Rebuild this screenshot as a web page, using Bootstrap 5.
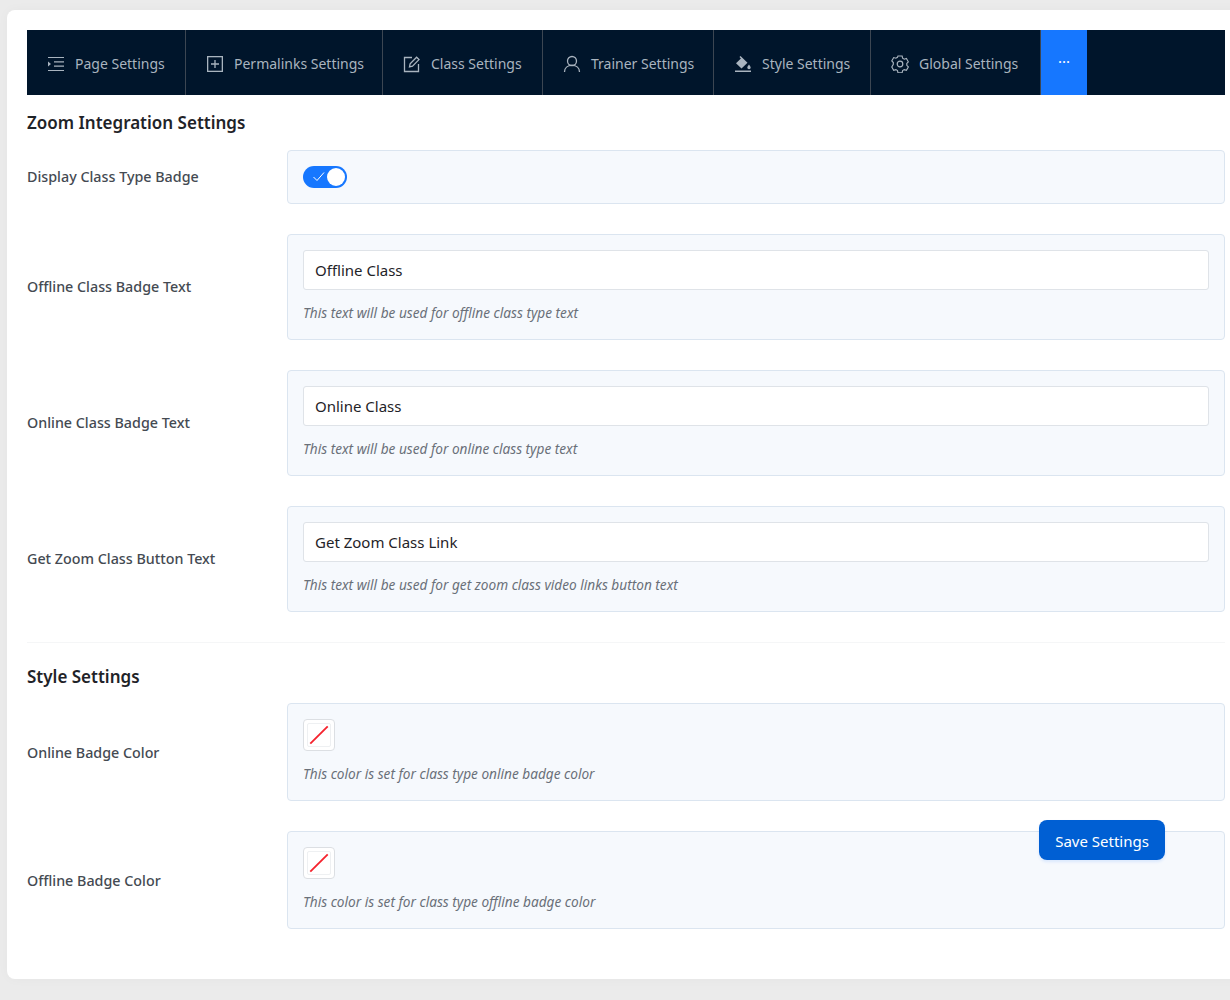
<!DOCTYPE html>
<html lang="en">
<head>
    <meta charset="UTF-8">
    <meta name="viewport" content="width=device-width, initial-scale=1.0">
    <title>Zoom Integration Settings</title>
    <link href="https://cdn.jsdelivr.net/npm/bootstrap@5.3.1/dist/css/bootstrap.min.css" rel="stylesheet">
    <style>
        html, body {
            overflow: hidden;
            height: 1000px;
        }
        body {
            background-color: #ebebeb;
            font-family: "Noto Sans", sans-serif;
            position: relative;
        }
        .settings-panel {
            width: 1238px;
            height: 969px;
            margin: 10px 0 0 7px;
            padding: 20px;
            background-color: #fff;
            border-radius: 8px;
            box-shadow: 0 0 12px rgba(0, 0, 0, .03);
        }
        .tabs-bar {
            height: 65px;
            background-color: #00152b;
            flex-wrap: nowrap;
        }
        .tabs-bar .tab-link {
            height: 65px;
            padding: 2px 0 0 20px;
            gap: 10px;
            flex: none;
            color: #a9b4bf;
            font-size: 14px;
            white-space: nowrap;
            border-right: 1px solid #3c4652;
            text-decoration: none;
        }
        .tab-link:nth-child(1) { width: 159px; }
        .tab-link:nth-child(2) { width: 197px; }
        .tab-link:nth-child(3) { width: 160px; }
        .tab-link:nth-child(4) { width: 171px; }
        .tab-link:nth-child(5) { width: 157px; }
        .tab-link:nth-child(6) { width: 170px; }
        .tabs-bar .tab-link svg {
            width: 18px;
            height: 18px;
            flex: none;
        }
        .tabs-bar .tab-more {
            width: 46px;
            height: 65px;
            padding-bottom: 2px;
            color: #fff;
            font-size: 15px;
            background-color: #1677ff;
            text-decoration: none;
        }
        .section-title {
            margin: 0;
            font-size: 17px;
            font-weight: 600;
            line-height: 24px;
            color: #1f2328;
        }
        .first-title { padding-top: 16px; height: 55px; }
        .second-title { padding-top: 22px; height: 60px; }
        .setting-row {
            margin-bottom: 30px;
        }
        .setting-row:last-child {
            margin-bottom: 0;
        }
        .setting-label {
            width: 260px;
            flex: none;
            font-size: 14.3px;
            font-weight: 500;
            color: #444a52;
        }
        .label-top { margin-top: -1px; }
        .label-low { margin-top: 2px; }
        .setting-box {
            flex: 1;
            padding: 15px;
            background-color: #f6f9fd;
            border: 1px solid #dbe5f0;
            border-radius: 4px;
        }
        .setting-box .form-control {
            height: 40px;
            padding: 0 11px;
            font-size: 15px;
            color: #1f2328;
            border-color: #dfe3e8;
            border-radius: 3px;
        }
        .setting-hint {
            margin: 12px 0 1px;
            font-size: 13.65px;
            line-height: 21px;
            font-style: italic;
            color: #6a7079;
        }
        .toggle-pill {
            width: 44px;
            height: 22px;
            padding: 2px;
            background-color: #1677ff;
            border-radius: 11px;
        }
        .toggle-pill .toggle-knob {
            width: 18px;
            height: 18px;
            background-color: #fff;
            border-radius: 50%;
        }
        .swatch-empty {
            display: block;
            width: 32px;
            height: 32px;
            padding: 3px;
            background-color: #fff;
            border: 1px solid #dcdfe3;
            border-radius: 4px;
        }
        .swatch-empty svg {
            display: block;
            width: 24px;
            height: 24px;
            border: 1px solid #eef0f2;
            border-radius: 2px;
        }
        .divider-line {
            margin: 30px 0 0;
            border-color: #d9dde1;
        }
        .save-btn {
            position: absolute;
            left: 1039px;
            top: 820px;
            width: 126px;
            height: 40px;
            padding: 2px 0 0;
            font-size: 15px;
            color: #fff;
            background-color: #005fd3;
            border: 0;
            border-radius: 8px;
            box-shadow: 0 2px 3px rgba(22, 119, 255, .12);
        }
    </style>
</head>
<body>
<div class="settings-panel">
    <nav class="tabs-bar d-flex">
        <a class="tab-link d-flex align-items-center" href="#">
            <svg viewBox="0 0 18 18" fill="none" stroke="currentColor" stroke-width="1.2"><path d="M1 2.500h16M7 6.800h10M7 11.200h10M1 15.500h16"/><path d="M1 6.500l3 2.500-3 2.500z" fill="currentColor" stroke="none"/></svg>
            Page Settings
        </a>
        <a class="tab-link d-flex align-items-center" href="#">
            <svg viewBox="0 0 18 18" fill="none" stroke="currentColor" stroke-width="1.3"><rect x="1.650" y="1.650" width="14.700" height="14.700"/><path d="M9 5v8M5 9h8"/></svg>
            Permalinks Settings
        </a>
        <a class="tab-link d-flex align-items-center" href="#">
            <svg viewBox="0 0 18 18" fill="none" stroke="currentColor" stroke-width="1.3"><path d="M9 2.500H1.500v14h14V9"/><path d="M6.500 11.800l.6-3L13.600 2.200l2.400 2.400-6.500 6.600z"/></svg>
            Class Settings
        </a>
        <a class="tab-link d-flex align-items-center" href="#">
            <svg viewBox="0 0 18 18" fill="none" stroke="currentColor" stroke-width="1.3"><circle cx="9" cy="6" r="4.500"/><path d="M1.500 17c0-4 3-6.600 7.500-6.600s7.500 2.600 7.500 6.600"/></svg>
            Trainer Settings
        </a>
        <a class="tab-link d-flex align-items-center" href="#">
            <svg viewBox="0 0 18 18" fill="currentColor"><path d="M6.500 1l-1 1 1.400 1.400L2 8.200l5.500 5.300 6-5.800z"/><path d="M15 9.500c1 1.300 1.700 2.200 1.700 3a1.700 1.700 0 0 1-3.400 0c0-.8.700-1.700 1.700-3z"/><rect x="1" y="15.500" width="16" height="1.500"/></svg>
            Style Settings
        </a>
        <a class="tab-link d-flex align-items-center" href="#">
            <svg viewBox="0 0 18 18" fill="none" stroke="currentColor" stroke-width="1.2"><path d="M6.800 1.200h4.400l.5 2.300 1.700 1 2.300-.7 2 3.500-1.600 1.700v2l1.600 1.700-2 3.500-2.300-.7-1.700 1-.5 2.300H6.800l-.5-2.300-1.700-1-2.300.7-2-3.500L1.900 10V8L.3 6.300l2-3.500 2.300.7 1.700-1z" transform="translate(.5 -.1) scale(.95)"/><circle cx="9" cy="9" r="2.800"/></svg>
            Global Settings
        </a>
        <a class="tab-more d-flex align-items-center justify-content-center" href="#">&middot;&middot;&middot;</a>
    </nav>

    <h5 class="section-title first-title">Zoom Integration Settings</h5>

    <div class="setting-row d-flex align-items-center">
        <label class="setting-label label-top">Display Class Type Badge</label>
        <div class="setting-box">
            <div class="toggle-pill d-flex align-items-center justify-content-between">
                <svg class="ms-2" width="14" height="14" viewBox="0 0 14 14" fill="none" stroke="#fff" stroke-width="1"><path d="M.5 7l3.500 3.500 7-8"/></svg>
                <span class="toggle-knob"></span>
            </div>
        </div>
    </div>

    <div class="setting-row d-flex align-items-center">
        <label class="setting-label">Offline Class Badge Text</label>
        <div class="setting-box">
            <input type="text" class="form-control" value="Offline Class">
            <p class="setting-hint">This text will be used for offline class type text</p>
        </div>
    </div>

    <div class="setting-row d-flex align-items-center">
        <label class="setting-label">Online Class Badge Text</label>
        <div class="setting-box">
            <input type="text" class="form-control" value="Online Class">
            <p class="setting-hint">This text will be used for online class type text</p>
        </div>
    </div>

    <div class="setting-row d-flex align-items-center">
        <label class="setting-label">Get Zoom Class Button Text</label>
        <div class="setting-box">
            <input type="text" class="form-control" value="Get Zoom Class Link">
            <p class="setting-hint">This text will be used for get zoom class video links button text</p>
        </div>
    </div>

    <hr class="divider-line">
    <h5 class="section-title second-title">Style Settings</h5>

    <div class="setting-row d-flex align-items-center">
        <label class="setting-label label-low">Online Badge Color</label>
        <div class="setting-box">
            <span class="swatch-empty"><svg viewBox="0 0 24 24"><path d="M2.500 21.500L21.500 2.500" stroke="#f5222d" stroke-width="2"/></svg></span>
            <p class="setting-hint">This color is set for class type online badge color</p>
        </div>
    </div>

    <div class="setting-row d-flex align-items-center">
        <label class="setting-label label-low">Offline Badge Color</label>
        <div class="setting-box">
            <span class="swatch-empty"><svg viewBox="0 0 24 24"><path d="M2.500 21.500L21.500 2.500" stroke="#f5222d" stroke-width="2"/></svg></span>
            <p class="setting-hint">This color is set for class type offline badge color</p>
        </div>
    </div>
</div>

<button type="button" class="btn save-btn">Save Settings</button>

<script src="https://cdn.jsdelivr.net/npm/bootstrap@5.3.1/dist/js/bootstrap.bundle.min.js"></script>
</body>
</html>
